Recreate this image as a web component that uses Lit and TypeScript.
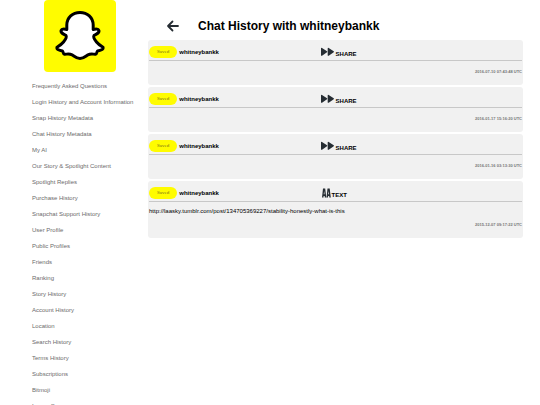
import { LitElement, html, css, svg } from "lit";
import { customElement, property } from "lit/decorators.js";

type Kind = "SHARE" | "TEXT";

interface Message {
  sender: string;
  kind: Kind;
  body: string;
  time: string;
}

const SECTIONS = [
  "Frequently Asked Questions",
  "Login History and Account Information",
  "Snap History Metadata",
  "Chat History Metadata",
  "My AI",
  "Our Story & Spotlight Content",
  "Spotlight Replies",
  "Purchase History",
  "Snapchat Support History",
  "User Profile",
  "Public Profiles",
  "Friends",
  "Ranking",
  "Story History",
  "Account History",
  "Location",
  "Search History",
  "Terms History",
  "Subscriptions",
  "Bitmoji",
  "In-app Surveys",
];

const MESSAGES: Message[] = [
  { sender: "whitneybankk", kind: "SHARE", body: "", time: "2016-07-10 07:43:48 UTC" },
  { sender: "whitneybankk", kind: "SHARE", body: "", time: "2016-01-17 15:16:20 UTC" },
  { sender: "whitneybankk", kind: "SHARE", body: "", time: "2016-01-16 03:13:30 UTC" },
  {
    sender: "whitneybankk",
    kind: "TEXT",
    body: "http://laasky.tumblr.com/post/134705369227/stability-honestly-what-is-this",
    time: "2015-12-07 09:17:22 UTC",
  },
];

const shareIcon = svg`<path d="M0 1.4Q0 .4 1 .9L6 4.300Q6.600 4.800 6 5.300L1 8.700Q0 9.200 0 8.200Z M6.700 1.400Q6.700 .4 7.700 .9L12.700 4.300Q13.300 4.800 12.700 5.300L7.700 8.700Q6.700 9.200 6.700 8.200Z"/>`;
const textIcon = svg`<path fill-rule="evenodd" d="M0 9L1 0H3.200L4.300 9H2.800L2.700 7.400H1.600L1.500 9Z M1.700 5.800H2.600L2.150 2.500Z M4.500 9L5.500 0H7.700L8.800 9H7.300L7.200 7.400H6.100L6 9Z M6.200 5.800H7.100L6.650 2.500Z"/>`;

@customElement("chat-message")
export class ChatMessage extends LitElement {
  @property({ attribute: false }) message!: Message;

  static styles = css`
    :host {
      display: block;
      padding: 0 1px;
      border-radius: 3px;
      background: #f1f1f1;
    }
    .head {
      display: grid;
      grid-template-columns: 46% 1fr;
      align-items: center;
      height: 21px;
      padding-top: 4px;
      box-sizing: border-box;
      border-bottom: 1px solid #c8c8c8;
    }
    .who,
    .kind {
      display: flex;
      align-items: center;
      font-size: 6px;
      font-weight: bold;
    }
    .who {
      gap: 2px;
    }
    .saved {
      padding: 0 8px;
      border-radius: 6px;
      background: #fffc00;
      color: #77701c;
      font: 5px/12px "Liberation Serif", serif;
    }
    .kind {
      gap: 1px;
    }
    .label {
      padding-top: 3px;
    }
    .icon {
      height: 10px;
      fill: #262d33;
    }
    .share {
      width: 14px;
    }
    .text {
      width: 9px;
      padding-left: 1px;
    }
    .body {
      margin: 0;
      padding-top: 5px;
      line-height: 8px;
      overflow-wrap: anywhere;
    }
    .time {
      display: block;
      padding: 7px 0 9px;
      text-align: right;
      font-size: 4px;
      font-weight: bold;
      line-height: 8px;
      color: #777;
    }
    .body + .time {
      padding-top: 6px;
    }
  `;

  render() {
    const m = this.message;
    const share = m.kind === "SHARE";
    return html`
      <div class="head">
        <div class="who"><span class="saved">Saved</span><span>${m.sender}</span></div>
        <div class="kind">
          <svg class="icon ${share ? "share" : "text"}" viewBox=${share ? "0 0 14 10" : "0 0 9 9"} aria-hidden="true">
            ${share ? shareIcon : textIcon}
          </svg>
          <span class="label">${m.kind}</span>
        </div>
      </div>
      ${m.body ? html`<p class="body">${m.body}</p>` : ""}
      <time class="time">${m.time}</time>
    `;
  }
}

@customElement("app-root")
export class AppRoot extends LitElement {
  static styles = css`
    :host {
      display: grid;
      grid-template-columns: 148px 1fr;
      height: 100vh;
      overflow: hidden;
      background: #fff;
      color: #000;
      font-family: "Liberation Sans", Arial, sans-serif;
      font-size: 6px;
    }
    .side {
      padding: 0 12px 0 32px;
    }
    .logo {
      display: block;
      width: 72px;
      height: 72px;
      margin: 0 12px 6px;
      border-radius: 4px;
      background: #fffc00;
    }
    .menu {
      margin: 0;
      padding: 0;
      list-style: none;
      line-height: 16px;
      white-space: nowrap;
    }
    .link {
      color: #6b6b6b;
      text-decoration: none;
    }
    .main {
      padding-right: 17px;
    }
    .top {
      display: flex;
      align-items: center;
      gap: 18px;
      height: 40px;
      padding: 11px 0 0 18px;
      box-sizing: border-box;
    }
    .back {
      display: flex;
      padding: 0;
      border: 0;
      background: none;
    }
    .arrow {
      width: 14px;
      height: 14px;
      fill: none;
      stroke: #262d33;
      stroke-width: 1.8;
      stroke-linecap: round;
      stroke-linejoin: round;
    }
    .title {
      margin: 0;
      font-size: 12px;
    }
    .list {
      display: flex;
      flex-direction: column;
      gap: 2px;
    }
  `;

  render() {
    return html`
      <nav class="side">
        <svg class="logo" viewBox="0 0 72 72" role="img" aria-label="Snapchat">
          <path
            fill="#fff"
            stroke="#000"
            stroke-width="3"
            stroke-linejoin="round"
            d="M36 12.500C28.500 12.500 23 17.500 22.800 25V29.500C20.500 29 17.300 28.500 17 31C16.800 33.500 20 34 22 35.500C23 37 21.500 39.500 19.500 42C17.500 44.500 15 46 13 47.200C12.300 49.500 15.500 50.500 18.500 51C19.500 52 18.800 54 20.500 54.200C23 54.300 25.500 53.500 28 54.800C30.500 56.300 32.500 58.500 36 58.500S41.500 56.300 44 54.800C46.500 53.500 49 54.300 51.500 54.200C53.200 54 52.500 52 53.500 51C56.500 50.500 59.700 49.500 59 47.200C57 46 54.500 44.500 52.500 42C50.500 39.500 49 37 50 35.500C52 34 55.200 33.500 55 31C54.700 28.500 51.500 29 49.200 29.500V25C49 17.500 43.500 12.500 36 12.500Z"
          />
        </svg>
        <ul class="menu">
          ${SECTIONS.map((s) => html`<li><a class="link" href="#">${s}</a></li>`)}
        </ul>
      </nav>
      <main class="main">
        <header class="top">
          <button class="back" aria-label="Back">
            <svg class="arrow" viewBox="0 0 14 14" aria-hidden="true">
              <path d="M12 7H2M6.500 2.500L2 7L6.500 11.500" />
            </svg>
          </button>
          <h1 class="title">Chat History with whitneybankk</h1>
        </header>
        <div class="list">
          ${MESSAGES.map((m) => html`<chat-message .message=${m}></chat-message>`)}
        </div>
      </main>
    `;
  }
}
